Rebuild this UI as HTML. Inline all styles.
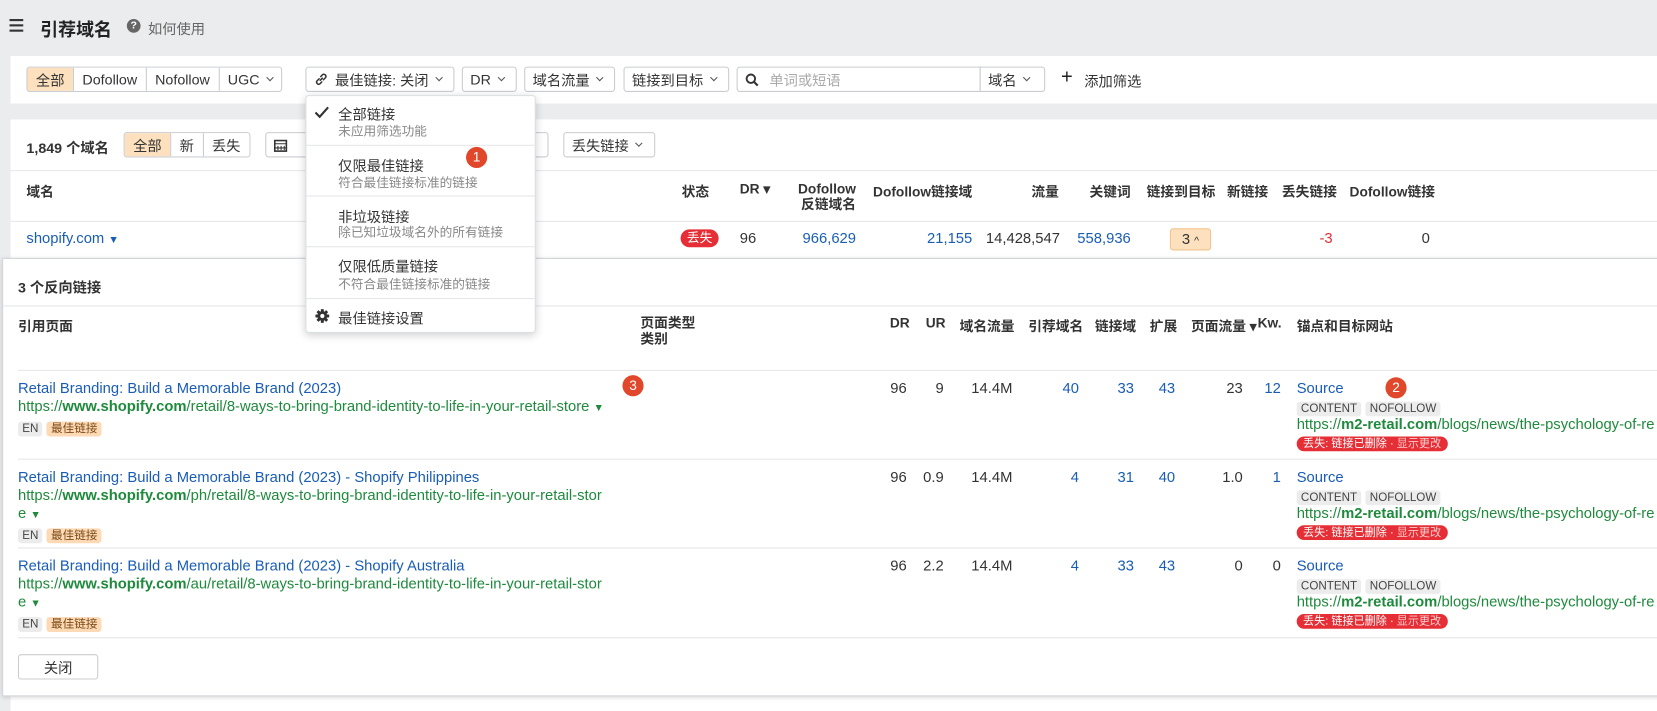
<!DOCTYPE html>
<html><head><meta charset="utf-8"><style>
*{box-sizing:border-box;margin:0;padding:0}
body{width:1657px;height:704px;overflow:hidden;background:#ebecee;font-family:"Liberation Sans","Noto Sans CJK SC",sans-serif;font-size:14px;color:#333;position:relative}
#w{position:absolute;left:0;top:0;width:1568px;height:667px;transform:scale(1.0568);transform-origin:0 0}
.a{position:absolute;white-space:nowrap}
.card{position:absolute;background:#fff}
.btn{position:absolute;height:24px;border:1px solid #c9ccd1;border-radius:3px;background:#fff;display:flex;align-items:center;padding:0 7px;color:#333;white-space:nowrap;font-size:13.5px}
.seg{position:absolute;height:24px;display:flex;border:1px solid #c9ccd1;border-radius:3px;overflow:hidden;font-size:13.5px}
.seg div{padding:0 8px;display:flex;align-items:center;border-left:1px solid #c9ccd1;background:#fff}
.seg div:first-child{border-left:none;background:#fde0bd}
.chev{display:inline-block;width:5px;height:5px;border-right:1.2px solid #555;border-bottom:1.2px solid #555;transform:rotate(45deg);margin-left:7px;margin-top:-3px}
.b{font-weight:bold}
.h{font-weight:bold;font-size:13px}
.blue{color:#1a5db5}
.grn{color:#1e8a3c}
.r{text-align:right}
.hl{position:absolute;height:1px;background:#e4e6e9}
.tag{display:inline-block;background:#ececec;color:#444;font-size:11px;padding:0 4px;height:14px;line-height:14px;border-radius:3px;margin-right:4px}
.tag.o{background:#fdd9b5;color:#7a4a16}
.num{position:absolute;width:20px;height:20px;border-radius:50%;background:#e0472b;color:#fff;font-size:13px;text-align:center;line-height:20px}
.rb{position:absolute;background:#e52e35;color:#fff;font-size:10.5px;border-radius:8px;padding:0 6px;height:14px;line-height:14px;white-space:nowrap}
.it{font-size:13.5px}
.sub{font-size:12px;color:#888}
</style></head><body><div id="w">

<div class="a" style="left:9px;top:18px;width:13px;height:2px;background:#333;box-shadow:0 5px 0 #333,0 10px 0 #333"></div>
<div class="a b" style="left:38px;top:14px;font-size:17px;color:#222">引荐域名</div>
<div class="a" style="left:120px;top:18px;width:13px;height:13px;border-radius:50%;background:#666;color:#fff;font-size:10px;text-align:center;line-height:13px;font-weight:bold">?</div>
<div class="a" style="left:140px;top:16px;color:#666;font-size:13.5px">如何使用</div>

<div class="card" style="left:10px;top:53px;width:1570px;height:45px"></div>
<div class="seg" style="left:25px;top:63px"><div>全部</div><div>Dofollow</div><div>Nofollow</div><div>UGC<span class="chev"></span></div></div>
<div class="btn" style="left:289px;top:63px;width:141px"><svg width="14" height="14" viewBox="0 0 14 14" style="margin-right:6px;flex:none"><path d="M6 8 L8 6 M5 6.5 L3 8.5 a2 2 0 0 0 2.8 2.8 L7.5 9.5 M9 7.5 L11 5.5 a2 2 0 0 0 -2.8 -2.8 L6.5 4.5" fill="none" stroke="#333" stroke-width="1.4" stroke-linecap="round"/></svg>最佳链接: 关闭<span class="chev"></span></div>
<div class="btn" style="left:437px;top:63px;width:52px">DR<span class="chev"></span></div>
<div class="btn" style="left:496px;top:63px;width:86px">域名流量<span class="chev"></span></div>
<div class="btn" style="left:590px;top:63px;width:100px">链接到目标<span class="chev"></span></div>
<div class="btn" style="left:697px;top:63px;width:231px;border-radius:3px 0 0 3px"><svg width="13" height="13" viewBox="0 0 13 13"><circle cx="5.5" cy="5.5" r="4" fill="none" stroke="#333" stroke-width="1.8"/><line x1="8.5" y1="8.5" x2="12" y2="12" stroke="#333" stroke-width="2"/></svg><span style="color:#aaa;margin-left:10px">单词或短语</span></div>
<div class="btn" style="left:927px;top:63px;width:62px;border-radius:0 3px 3px 0">域名<span class="chev"></span></div>
<div class="a" style="left:1004px;top:63px;font-size:19px;color:#222">+</div>
<div class="a" style="left:1026px;top:66px;font-size:13.5px">添加筛选</div>

<div class="card" style="left:10px;top:113px;width:1570px;height:560px"></div>
<div class="a b" style="left:25px;top:129px;font-size:13.5px">1,849 个域名</div>
<div class="seg" style="left:117px;top:125px"><div>全部</div><div>新</div><div>丢失</div></div>
<div class="btn" style="left:251px;top:125px;width:268px"><svg width="13" height="13" viewBox="0 0 13 13"><rect x="1" y="2" width="11" height="10" fill="none" stroke="#333" stroke-width="1.5"/><path d="M1 5h11M4 7v4M7 7v4M10 7v4M1 9h11" stroke="#333" stroke-width="1"/></svg></div>
<div class="btn" style="left:533px;top:125px;width:87px">丢失链接<span class="chev"></span></div>
<div class="hl" style="left:10px;top:161px;width:1570px"></div>
<div class="a h" style="left:25px;top:171px">域名</div>
<div class="a h" style="left:645px;top:171px">状态</div>
<div class="a h" style="left:700px;top:171px">DR ▾</div>
<div class="a h r" style="left:730px;top:171px;width:80px;line-height:15px">Dofollow<br>反链域名</div>
<div class="a h r" style="left:820px;top:171px;width:100px">Dofollow链接域</div>
<div class="a h r" style="left:940px;top:171px;width:62px">流量</div>
<div class="a h r" style="left:1010px;top:171px;width:60px">关键词</div>
<div class="a h" style="left:1085px;top:171px">链接到目标</div>
<div class="a h" style="left:1161px;top:171px">新链接</div>
<div class="a h" style="left:1213px;top:171px">丢失链接</div>
<div class="a h" style="left:1277px;top:171px">Dofollow链接</div>
<div class="hl" style="left:10px;top:209px;width:1570px"></div>
<div class="a blue" style="left:25px;top:217px">shopify.com <span style="font-size:10px">▼</span></div>
<div class="a" style="left:644px;top:217px;background:#e52e35;color:#fff;border-radius:9px;padding:0 6px;height:17px;line-height:17px;font-size:12px">丢失</div>
<div class="a" style="left:700px;top:217px">96</div>
<div class="a blue r" style="left:730px;top:217px;width:80px">966,629</div>
<div class="a blue r" style="left:840px;top:217px;width:80px">21,155</div>
<div class="a r" style="left:915px;top:217px;width:88px">14,428,547</div>
<div class="a blue r" style="left:990px;top:217px;width:80px">558,936</div>
<div class="a" style="left:1107px;top:216px;width:39px;height:21px;background:#fde0bd;border:1px solid #f2c48e;border-radius:3px;text-align:center;line-height:19px">3 <span style="font-size:10px">^</span></div>
<div class="a r" style="left:1210px;top:217px;width:51px;color:#e52e35">-3</div>
<div class="a r" style="left:1300px;top:217px;width:53px">0</div>

<div class="card" style="left:2px;top:244px;width:1580px;height:415px;border:1px solid #cfd2d6;box-shadow:0 1px 4px rgba(0,0,0,.15)"></div>
<div class="a b" style="left:17px;top:261px;font-size:13.5px">3 个反向链接</div>
<div class="hl" style="left:3px;top:289px;width:1570px"></div>
<div class="a h" style="left:17px;top:298px">引用页面</div>
<div class="a h" style="left:606px;top:298px;line-height:15px">页面类型<br>类别</div>
<div class="a h" style="left:842px;top:298px">DR</div>
<div class="a h" style="left:876px;top:298px">UR</div>
<div class="a h" style="left:908px;top:298px">域名流量</div>
<div class="a h" style="left:973px;top:298px">引荐域名</div>
<div class="a h" style="left:1036px;top:298px">链接域</div>
<div class="a h" style="left:1088px;top:298px">扩展</div>
<div class="a h" style="left:1127px;top:298px">页面流量 ▾</div>
<div class="a h" style="left:1190px;top:298px">Kw.</div>
<div class="a h" style="left:1227px;top:298px">锚点和目标网站</div>
<div class="hl" style="left:17px;top:350px;width:1560px"></div>

<div class="a blue" style="left:17px;top:359px">Retail Branding: Build a Memorable Brand (2023)</div>
<div class="a grn" style="left:17px;top:376px">https://<b>www.shopify.com</b>/retail/8-ways-to-bring-brand-identity-to-life-in-your-retail-store <span style="font-size:10px">▼</span></div>
<div class="a" style="left:17px;top:396px"><span class="tag">EN</span><span class="tag o">最佳链接</span></div>
<div class="hl" style="left:17px;top:434px;width:1560px"></div>
<div class="a blue" style="left:17px;top:443px">Retail Branding: Build a Memorable Brand (2023) - Shopify Philippines</div>
<div class="a grn" style="left:17px;top:460px">https://<b>www.shopify.com</b>/ph/retail/8-ways-to-bring-brand-identity-to-life-in-your-retail-stor</div>
<div class="a grn" style="left:17px;top:477px">e <span style="font-size:10px">▼</span></div>
<div class="a" style="left:17px;top:497px"><span class="tag">EN</span><span class="tag o">最佳链接</span></div>
<div class="hl" style="left:17px;top:518px;width:1560px"></div>
<div class="a blue" style="left:17px;top:527px">Retail Branding: Build a Memorable Brand (2023) - Shopify Australia</div>
<div class="a grn" style="left:17px;top:544px">https://<b>www.shopify.com</b>/au/retail/8-ways-to-bring-brand-identity-to-life-in-your-retail-stor</div>
<div class="a grn" style="left:17px;top:561px">e <span style="font-size:10px">▼</span></div>
<div class="a" style="left:17px;top:581px"><span class="tag">EN</span><span class="tag o">最佳链接</span></div>
<div class="hl" style="left:17px;top:603px;width:1560px"></div>
<div class="btn" style="left:17px;top:619px;width:76px;justify-content:center">关闭</div>

<div class="a r" style="left:818px;top:359px;width:40px">96</div>
<div class="a r" style="left:853px;top:359px;width:40px">9</div>
<div class="a r" style="left:903px;top:359px;width:55px">14.4M</div>
<div class="a r blue" style="left:981px;top:359px;width:40px">40</div>
<div class="a r blue" style="left:1033px;top:359px;width:40px">33</div>
<div class="a r blue" style="left:1072px;top:359px;width:40px">43</div>
<div class="a r" style="left:1136px;top:359px;width:40px">23</div>
<div class="a r blue" style="left:1172px;top:359px;width:40px">12</div>

<div class="a r" style="left:818px;top:443px;width:40px">96</div>
<div class="a r" style="left:853px;top:443px;width:40px">0.9</div>
<div class="a r" style="left:903px;top:443px;width:55px">14.4M</div>
<div class="a r blue" style="left:981px;top:443px;width:40px">4</div>
<div class="a r blue" style="left:1033px;top:443px;width:40px">31</div>
<div class="a r blue" style="left:1072px;top:443px;width:40px">40</div>
<div class="a r" style="left:1136px;top:443px;width:40px">1.0</div>
<div class="a r blue" style="left:1172px;top:443px;width:40px">1</div>

<div class="a r" style="left:818px;top:527px;width:40px">96</div>
<div class="a r" style="left:853px;top:527px;width:40px">2.2</div>
<div class="a r" style="left:903px;top:527px;width:55px">14.4M</div>
<div class="a r blue" style="left:981px;top:527px;width:40px">4</div>
<div class="a r blue" style="left:1033px;top:527px;width:40px">33</div>
<div class="a r blue" style="left:1072px;top:527px;width:40px">43</div>
<div class="a r" style="left:1136px;top:527px;width:40px">0</div>
<div class="a r" style="left:1172px;top:527px;width:40px">0</div>

<div class="a blue" style="left:1227px;top:359px">Source</div>
<div class="a" style="left:1227px;top:377px"><span class="tag">CONTENT</span><span class="tag">NOFOLLOW</span></div>
<div class="a grn" style="left:1227px;top:393px">https://<b>m2-retail.com</b>/blogs/news/the-psychology-of-re</div>
<div class="rb" style="left:1227px;top:413px">丢失: 链接已删除 · <span style="color:#fcc">显示更改</span></div>

<div class="a blue" style="left:1227px;top:443px">Source</div>
<div class="a" style="left:1227px;top:461px"><span class="tag">CONTENT</span><span class="tag">NOFOLLOW</span></div>
<div class="a grn" style="left:1227px;top:477px">https://<b>m2-retail.com</b>/blogs/news/the-psychology-of-re</div>
<div class="rb" style="left:1227px;top:497px">丢失: 链接已删除 · <span style="color:#fcc">显示更改</span></div>

<div class="a blue" style="left:1227px;top:527px">Source</div>
<div class="a" style="left:1227px;top:545px"><span class="tag">CONTENT</span><span class="tag">NOFOLLOW</span></div>
<div class="a grn" style="left:1227px;top:561px">https://<b>m2-retail.com</b>/blogs/news/the-psychology-of-re</div>
<div class="rb" style="left:1227px;top:581px">丢失: 链接已删除 · <span style="color:#fcc">显示更改</span></div>

<div class="card" style="left:289px;top:90px;width:218px;height:225px;border:1px solid #dcdfe3;border-radius:3px;box-shadow:0 2px 8px rgba(0,0,0,.18)"></div>
<svg class="a" style="left:297px;top:100px" width="15" height="12" viewBox="0 0 15 12"><path d="M1.5 6.5 L5.5 10.5 L13.5 1.5" fill="none" stroke="#333" stroke-width="2"/></svg>
<div class="a it" style="left:320px;top:97px">全部链接</div>
<div class="a sub" style="left:320px;top:115px">未应用筛选功能</div>
<div class="hl" style="left:290px;top:137px;width:216px"></div>
<div class="a it" style="left:320px;top:146px">仅限最佳链接</div>
<div class="a sub" style="left:320px;top:164px">符合最佳链接标准的链接</div>
<div class="hl" style="left:290px;top:185px;width:216px"></div>
<div class="a it" style="left:320px;top:194px">非垃圾链接</div>
<div class="a sub" style="left:320px;top:211px">除已知垃圾域名外的所有链接</div>
<div class="hl" style="left:290px;top:233px;width:216px"></div>
<div class="a it" style="left:320px;top:241px">仅限低质量链接</div>
<div class="a sub" style="left:320px;top:260px">不符合最佳链接标准的链接</div>
<div class="hl" style="left:290px;top:282px;width:216px"></div>
<svg class="a" style="left:298px;top:292px" width="14" height="14" viewBox="0 0 14 14"><g fill="#333"><circle cx="7" cy="7" r="4.6"/><rect x="5.6" y="0.5" width="2.8" height="13" rx="0.6"/><rect x="0.5" y="5.6" width="13" height="2.8" rx="0.6"/><rect x="5.6" y="0.5" width="2.8" height="13" rx="0.6" transform="rotate(45 7 7)"/><rect x="5.6" y="0.5" width="2.8" height="13" rx="0.6" transform="rotate(-45 7 7)"/></g><circle cx="7" cy="7" r="2" fill="#fff"/></svg>
<div class="a it" style="left:320px;top:290px">最佳链接设置</div>

<div class="num" style="left:441px;top:139px">1</div>
<div class="num" style="left:1311px;top:357px">2</div>
<div class="num" style="left:589px;top:355px">3</div>
</div></body></html>
